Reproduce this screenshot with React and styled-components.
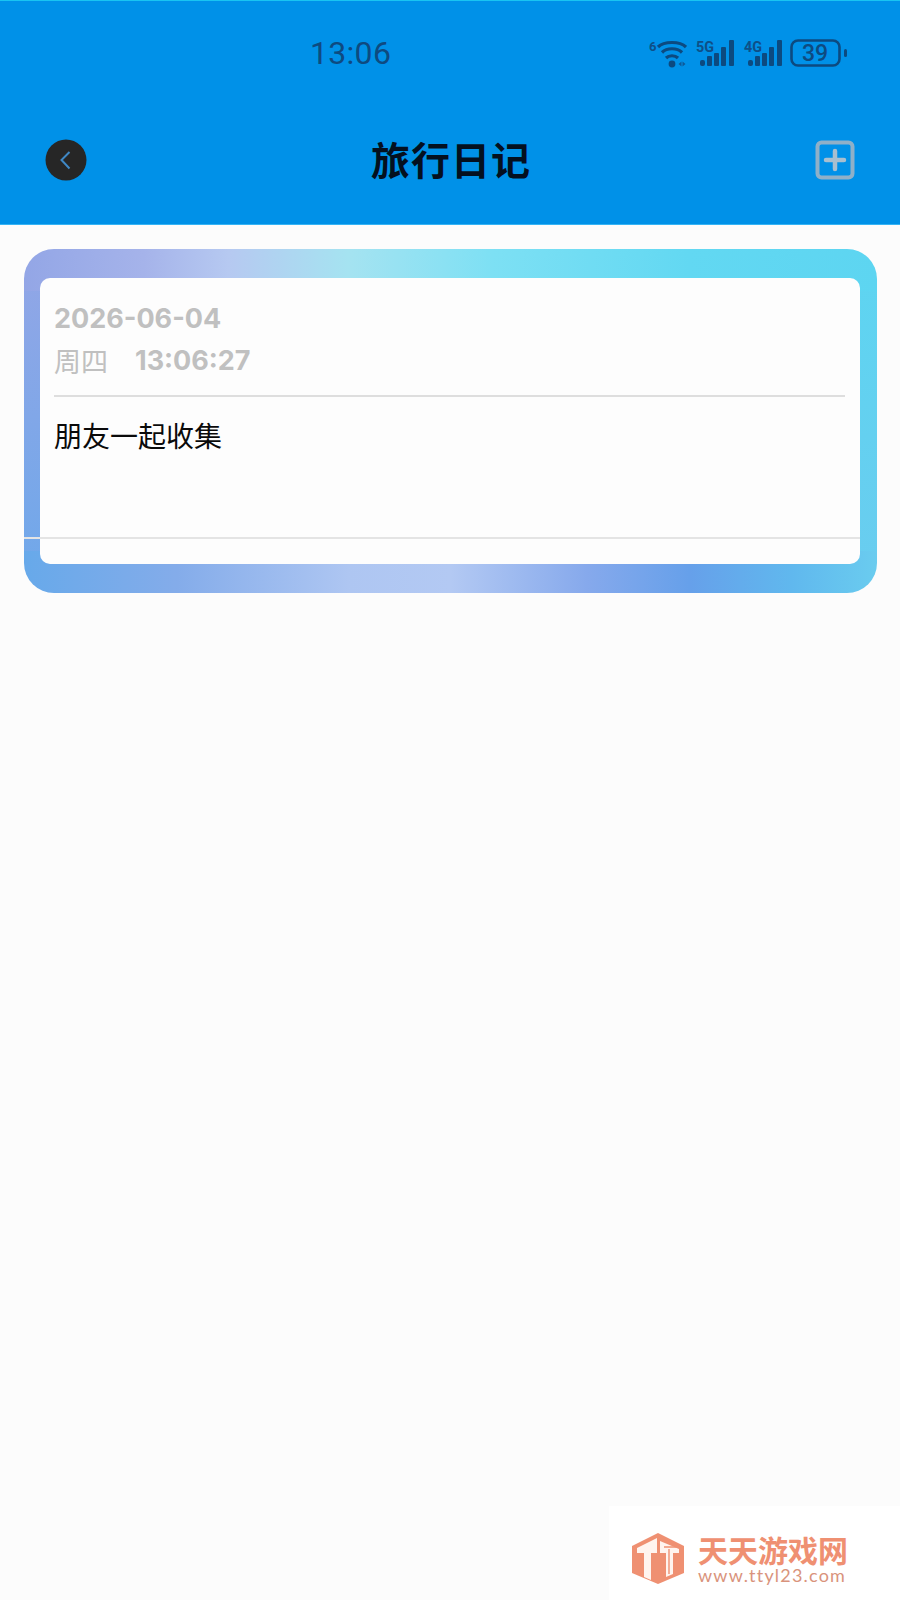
import styled, { createGlobalStyle } from "styled-components";

const GlobalStyle = createGlobalStyle`
  html, body {
    margin: 0;
    padding: 0;
    background: #fcfcfc;
  }
  * {
    box-sizing: border-box;
  }
`;

const cjk = `"Noto Sans CJK SC", "Noto Sans", sans-serif`;
const latin = `Inter, Roboto, "Noto Sans CJK SC", sans-serif`;

const Back = () => (
  <svg width="42" height="42" viewBox="0 0 42 42">
    <circle cx="21" cy="21" r="20.5" fill="#262626" />
    <path d="M24.5 13 L16.5 21 L24.5 29.5" fill="none" stroke="#3f88c5" strokeWidth="2" />
  </svg>
);

const Plus = () => (
  <svg width="40" height="40" viewBox="0 0 40 40">
    <rect x="2.5" y="2.5" width="35" height="35" rx="4" fill="none" stroke="#8fb0c8" strokeWidth="4" />
    <path d="M20 11 V29 M11 20 H29" stroke="#a9bfcf" strokeWidth="4.5" strokeLinecap="round" />
  </svg>
);

const Wifi = () => (
  <svg width="38" height="30" viewBox="0 0 38 30">
    <text x="0" y="13" fontFamily="Roboto, sans-serif" fontWeight="700" fontSize="13" fill="#0e4f87">6</text>
    <path
      d="M9 9 C15 3 31 3 37 9 M13 14.5 C18 9.5 28 9.5 33 14.5 M17 20 C20 17 26 17 29 20"
      fill="none"
      stroke="#0c4a80"
      strokeWidth="3.2"
    />
    <circle cx="23" cy="26" r="3.4" fill="#0c4a80" />
    <path d="M29.5 26 L32.5 23.5 V28.5 Z M33.5 23.5 L36.5 26 L33.5 28.5 Z" fill="#0e5a98" />
  </svg>
);

const Signal = ({ label }) => (
  <svg width="41" height="29" viewBox="0 0 41 29">
    <text x="2" y="14" textLength="18" lengthAdjust="spacingAndGlyphs" fontFamily="Roboto, sans-serif" fontWeight="700" fontSize="14" fill="#0e4f87">{label}</text>
    <rect x="6" y="22" width="5" height="6" rx="2" fill="#0c4a80" />
    <rect x="13" y="18" width="5" height="10" rx="1" fill="#0c4a80" />
    <rect x="20" y="15" width="5" height="13" rx="1" fill="#0c4a80" />
    <rect x="27" y="9" width="5" height="19" rx="1" fill="#0c4a80" />
    <rect x="35" y="2" width="5" height="26" rx="1" fill="#0c4a80" />
  </svg>
);

const Battery = () => (
  <svg width="58" height="30" viewBox="0 0 58 30">
    <rect x="1.5" y="2.5" width="48" height="25" rx="6.5" fill="none" stroke="#0c4a80" strokeWidth="2.6" />
    <text x="25" y="23" textAnchor="middle" fontFamily="Roboto, sans-serif" fontWeight="500" fontSize="23" fill="#0e4a80">39</text>
    <rect x="54" y="11" width="3" height="8" rx="1.5" fill="#0c4a80" />
  </svg>
);

const LogoMark = () => (
  <svg width="58" height="52" viewBox="0 0 58 52">
    <path d="M29 0 L55 13 V40 L29 51 L3 40 V13 Z" fill="#ef9072" />
    <path d="M8 15 L28 5 V20 H22 V47 L15 44 V20 H8 Z M31 8 L50 16 V20 H44 V41 L37 44 V20 H31 Z" fill="#fff4ef" />
    <path d="M35 14 H48 M40 16 V41" stroke="#ef9072" strokeWidth="1.4" fill="none" />
  </svg>
);

export default function App() {
  return (
    <Page>
      <GlobalStyle />
      <Header>
        <StatusBar>
          <Clock>13:06</Clock>
          <StatusIcons>
            <Wifi />
            <Signal label="5G" />
            <Signal label="4G" />
            <Battery />
          </StatusIcons>
        </StatusBar>
        <NavBar>
          <Back />
          <Title>旅行日记</Title>
          <Plus />
        </NavBar>
      </Header>
      <Card>
        <CardInner>
          <DateBlock>
            <DateLine>2026-06-04</DateLine>
            <TimeLine>
              <Weekday>周四</Weekday>
              <span>13:06:27</span>
            </TimeLine>
          </DateBlock>
          <Content>朋友一起收集</Content>
        </CardInner>
      </Card>
      <Watermark>
        <LogoMark />
        <WatermarkText>
          <WatermarkName>天天游戏网</WatermarkName>
          <WatermarkUrl>www.ttyl23.com</WatermarkUrl>
        </WatermarkText>
      </Watermark>
    </Page>
  );
}

const Page = styled.div`
  position: relative;
  width: 900px;
  height: 1600px;
  overflow: hidden;
  background: #fcfcfc;
`;

const Header = styled.header`
  height: 225px;
  background: #0091e8;
  border-top: 1px solid #19c4f2;
  border-bottom: 1px solid #35b4f5;
`;

const StatusBar = styled.div`
  height: 100px;
  padding: 33px 52px 0 310px;
  display: flex;
  justify-content: space-between;
  align-items: flex-start;
`;

const Clock = styled.div`
  font-family: Roboto, sans-serif;
  font-size: 32px;
  line-height: 38px;
  letter-spacing: 0.3px;
  color: #0e4a80;
`;

const StatusIcons = styled.div`
  display: flex;
  align-items: flex-start;
  gap: 7px;
  padding-top: 4px;
`;

const NavBar = styled.div`
  height: 42px;
  margin-top: 38px;
  padding: 0 45px;
  display: flex;
  justify-content: space-between;
  align-items: center;
`;

const Title = styled.h1`
  margin: 0;
  padding-bottom: 4px;
  font-family: ${cjk};
  font-size: 39px;
  font-weight: 700;
  letter-spacing: 1px;
  color: #04101f;
`;

const Card = styled.section`
  position: relative;
  width: 853px;
  height: 344px;
  margin: 24px 0 0 24px;
  padding: 29px 17px 29px 16px;
  border-radius: 30px;
  background:
    linear-gradient(to right, #93a6e6 0, #a5b3ea 14%, #b6c9f1 24%, #a5e3f1 38%, #7de0f4 55%, #62d8f2 78%, #5dd5f1 100%) top / 100% 42px no-repeat,
    linear-gradient(to right, #67a9ea 0, #84acea 18%, #aec6f2 38%, #b3c9f3 50%, #86a9ec 66%, #66a0ea 78%, #60b8ee 90%, #6accef 100%) bottom / 100% 42px no-repeat,
    linear-gradient(to bottom, #93a6e6, #6ea8ea) left / 30px 100% no-repeat,
    linear-gradient(to bottom, #5dd5f1, #6accef) right / 30px 100% no-repeat;

  &::after {
    content: "";
    position: absolute;
    left: 0;
    right: 17px;
    top: 288px;
    height: 2px;
    background: #e4e4e4;
  }
`;

const CardInner = styled.div`
  height: 100%;
  padding: 0 15px 0 14px;
  border-radius: 10px;
  background: #fdfdfd;
`;

const DateBlock = styled.div`
  height: 119px;
  padding-top: 21px;
  border-bottom: 2px solid #dedede;
  font-family: ${latin};
  font-size: 27px;
  font-weight: 700;
  color: #c0c0c0;
`;

const DateLine = styled.div`
  line-height: 40px;
`;

const TimeLine = styled.div`
  margin-top: 2px;
  line-height: 40px;
  display: flex;
  gap: 27px;
`;

const Weekday = styled.span`
  font-family: ${cjk};
  font-weight: 400;
`;

const Content = styled.p`
  margin: 18px 0 0;
  font-family: ${cjk};
  font-size: 28px;
  line-height: 40px;
  color: #0a0a0a;
`;

const Watermark = styled.aside`
  position: absolute;
  right: 0;
  bottom: 0;
  width: 291px;
  height: 94px;
  padding: 27px 0 0 20px;
  background: #ffffff;
  display: flex;
  align-items: flex-start;
  gap: 11px;
`;

const WatermarkText = styled.div`
  display: flex;
  flex-direction: column;
`;

const WatermarkName = styled.div`
  font-family: ${cjk};
  font-size: 30px;
  font-weight: 700;
  line-height: 32px;
  color: #ef9072;
`;

const WatermarkUrl = styled.div`
  font-family: Lato, sans-serif;
  font-size: 18px;
  line-height: 20px;
  letter-spacing: 1.2px;
  color: #d9937c;
`;
